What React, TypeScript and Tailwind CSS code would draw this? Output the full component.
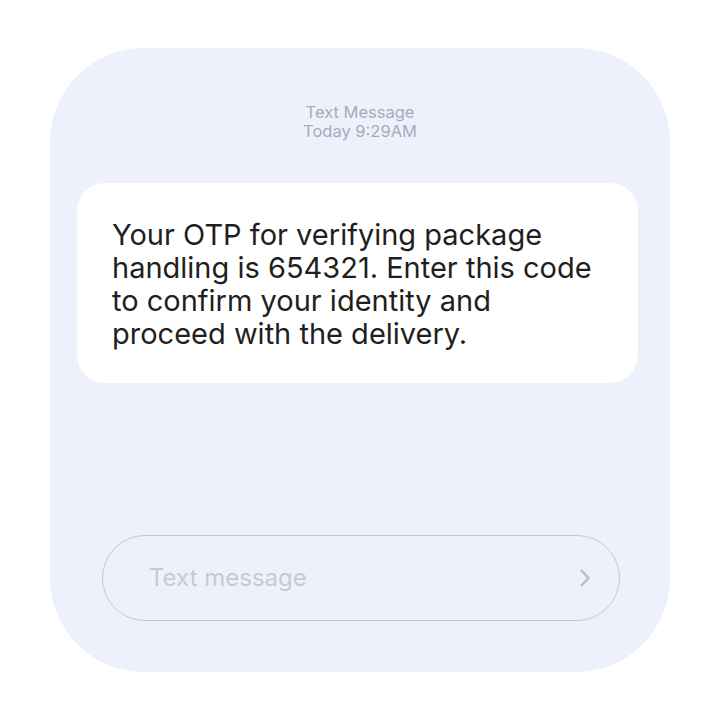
import React from "react";

export default function App() {
  return (
    <div className="w-[720px] h-[720px] bg-white flex flex-col items-start pt-[48px] pl-[50px]" style={{ fontFamily: "Inter, 'Liberation Sans', sans-serif" }}>
      <div className="w-[620px] h-[624px] rounded-[94px] bg-[#eef1fb] flex flex-col">
        <div className="mt-[55px] flex flex-col items-center text-[16.5px] leading-[19px] text-[#a7abbb]">
          <span>Text Message</span>
          <span>Today 9:29AM</span>
        </div>
        <div className="mt-[42px] ml-[27px] w-[561px] h-[200px] rounded-[28px] bg-white pl-[35px] pr-[41px] pt-[35px]">
          <p className="text-[29px] leading-[33px] text-[#1f1f21] tracking-[0px]">
            Your OTP for verifying package handling is 654321. Enter this code to confirm your identity and proceed with the delivery.
          </p>
        </div>
        <div className="mt-[152px] ml-[52px] w-[518px] h-[86px] rounded-full border-[1.5px] border-[#c4c9d8] flex items-center pl-[46px] pr-[27px]">
          <span className="flex-1 text-[24px] text-[#c6cad8]">Text message</span>
          <svg width="14" height="20" viewBox="0 0 14 20" fill="none">
            <path d="M3.5 2.5l7 7.5-7 7.5" stroke="#b6bbcb" strokeWidth="2.2" strokeLinecap="round" strokeLinejoin="round" />
          </svg>
        </div>
      </div>
    </div>
  );
}
